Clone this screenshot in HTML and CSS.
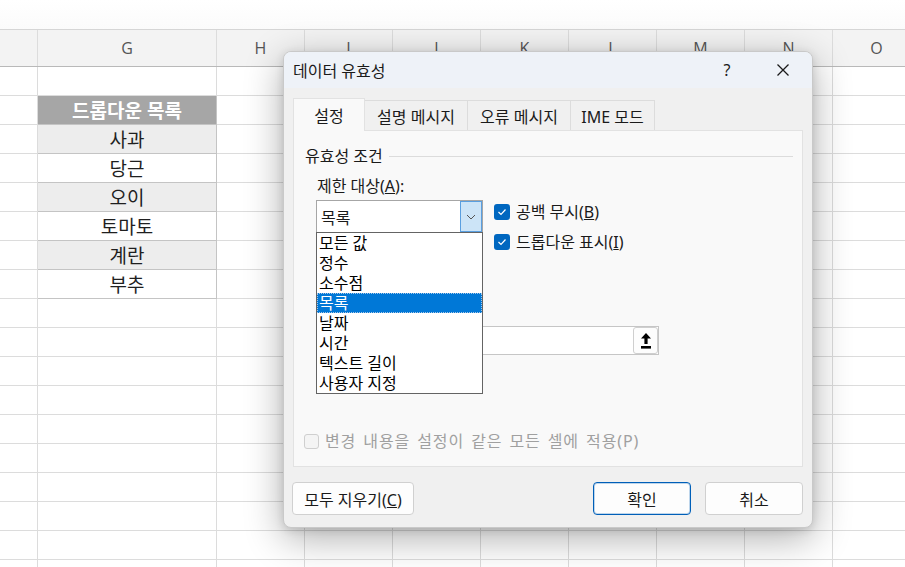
FILE: index.html
```html
<!DOCTYPE html>
<html lang="ko">
<head>
<meta charset="utf-8">
<link rel="stylesheet" href="styles.css">
</head>
<body>
<div class="sheet">
  <div class="topstrip"></div>
  <div class="colhead">
    <span></span><span>G</span><span>H</span><span>I</span><span>J</span><span>K</span><span>L</span><span>M</span><span>N</span><span>O</span>
  </div>
  <div class="row"><i></i><i></i><i></i><i></i><i></i><i></i><i></i><i></i><i></i><i></i></div>
  <div class="row"><i></i><i class="cell head">드롭다운 목록</i><i></i><i></i><i></i><i></i><i></i><i></i><i></i><i></i></div>
  <div class="row"><i></i><i class="cell alt">사과</i><i></i><i></i><i></i><i></i><i></i><i></i><i></i><i></i></div>
  <div class="row"><i></i><i class="cell">당근</i><i></i><i></i><i></i><i></i><i></i><i></i><i></i><i></i></div>
  <div class="row"><i></i><i class="cell alt">오이</i><i></i><i></i><i></i><i></i><i></i><i></i><i></i><i></i></div>
  <div class="row"><i></i><i class="cell">토마토</i><i></i><i></i><i></i><i></i><i></i><i></i><i></i><i></i></div>
  <div class="row"><i></i><i class="cell alt">계란</i><i></i><i></i><i></i><i></i><i></i><i></i><i></i><i></i></div>
  <div class="row"><i></i><i class="cell">부추</i><i></i><i></i><i></i><i></i><i></i><i></i><i></i><i></i></div>
  <div class="row"><i></i><i></i><i></i><i></i><i></i><i></i><i></i><i></i><i></i><i></i></div>
  <div class="row"><i></i><i></i><i></i><i></i><i></i><i></i><i></i><i></i><i></i><i></i></div>
  <div class="row"><i></i><i></i><i></i><i></i><i></i><i></i><i></i><i></i><i></i><i></i></div>
  <div class="row"><i></i><i></i><i></i><i></i><i></i><i></i><i></i><i></i><i></i><i></i></div>
  <div class="row"><i></i><i></i><i></i><i></i><i></i><i></i><i></i><i></i><i></i><i></i></div>
  <div class="row"><i></i><i></i><i></i><i></i><i></i><i></i><i></i><i></i><i></i><i></i></div>
  <div class="row"><i></i><i></i><i></i><i></i><i></i><i></i><i></i><i></i><i></i><i></i></div>
  <div class="row"><i></i><i></i><i></i><i></i><i></i><i></i><i></i><i></i><i></i><i></i></div>
  <div class="row"><i></i><i></i><i></i><i></i><i></i><i></i><i></i><i></i><i></i><i></i></div>
  <div class="row"><i></i><i></i><i></i><i></i><i></i><i></i><i></i><i></i><i></i><i></i></div>
</div>

<div class="dialog">
  <div class="titlebar">
    <span class="title">데이터 유효성</span>
    <span class="help">?</span>
    <span class="close">
      <svg width="14" height="14" viewBox="0 0 14 14"><path d="M1.5 1.5 L12.5 12.5 M12.5 1.5 L1.5 12.5" stroke="#1a1a1a" stroke-width="1.3" fill="none"/></svg>
    </span>
  </div>
  <div class="dlg-body">
    <div class="tabs">
      <div class="tab active w1">설정</div>
      <div class="tab w2">설명 메시지</div>
      <div class="tab w2">오류 메시지</div>
      <div class="tab w3">IME 모드</div>
    </div>
    <div class="panel">
      <div class="legend">유효성 조건</div>
      <div class="settings">
        <div class="lbl">제한 대상(<u>A</u>):</div>
        <div class="combo-row">
          <div class="combo">
            <span class="combo-text">목록</span>
            <span class="combo-btn">
              <svg width="10" height="6" viewBox="0 0 10 6"><path d="M1 1 L5 5 L9 1" stroke="#555" stroke-width="1" fill="none"/></svg>
            </span>
            <div class="list">
              <div class="item">모든 값</div>
              <div class="item">정수</div>
              <div class="item">소수점</div>
              <div class="item sel">목록</div>
              <div class="item">날짜</div>
              <div class="item">시간</div>
              <div class="item">텍스트 길이</div>
              <div class="item">사용자 지정</div>
            </div>
          </div>
          <div class="checks">
            <div class="check"><span class="cb"><svg width="10" height="8" viewBox="0 0 10 8"><path d="M1.5 4 L4 6.5 L8.5 1.5" stroke="#fff" stroke-width="1.2" fill="none"/></svg></span><span>공백 무시(<u>B</u>)</span></div>
            <div class="check"><span class="cb"><svg width="10" height="8" viewBox="0 0 10 8"><path d="M1.5 4 L4 6.5 L8.5 1.5" stroke="#fff" stroke-width="1.2" fill="none"/></svg></span><span>드롭다운 표시(<u>I</u>)</span></div>
          </div>
        </div>
        <div class="src-input">
          <span class="upload">
            <svg width="12" height="18" viewBox="0 0 12 18"><path d="M6 1 L11 6.5 H7.6 V12 H4.4 V6.5 H1 Z" fill="#000"/><rect x="1" y="14" width="10" height="2.6" fill="#000"/></svg>
          </span>
        </div>
      </div>
      <div class="apply"><span class="cb-off"></span><span>변경 내용을 설정이 같은 모든 셀에 적용(P)</span></div>
    </div>
    <div class="buttons">
      <button class="btn clear">모두 지우기(<u>C</u>)</button>
      <span class="spacer"></span>
      <button class="btn ok">확인</button>
      <button class="btn">취소</button>
    </div>
  </div>
</div>
</body>
</html>
```

FILE: styles.css
```css
html, body {
  margin: 0;
  padding: 0;
  width: 905px;
  height: 567px;
  overflow: hidden;
  background: #ffffff;
  font-family: "Noto Sans", "Noto Sans CJK KR", sans-serif;
}

.sheet {
  width: 905px;
  overflow: hidden;
}

.topstrip {
  height: 29px;
  background: linear-gradient(#ffffff, #fbfbfb);
  border-bottom: 1px solid #d6d6d6;
}

.colhead,
.row {
  display: grid;
  grid-template-columns: 38px 179px repeat(8, 88px);
  width: 921px;
}

.colhead {
  height: 37px;
  background: #f3f3f3;
  border-bottom: 1px solid #b9b9b9;
  box-sizing: border-box;
}

.colhead span {
  border-right: 1px solid #dcdcdc;
  display: flex;
  align-items: center;
  justify-content: center;
  font-family: "Open Sans", "Liberation Sans", sans-serif;
  font-size: 16px;
  color: #555;
}

.row {
  height: 29px;
}

.row i {
  font-style: normal;
  border-right: 1px solid #dcdcdc;
  border-bottom: 1px solid #dcdcdc;
  box-sizing: border-box;
}

.row .cell {
  display: flex;
  align-items: center;
  justify-content: center;
  font-size: 19px;
  color: #1f1f1f;
  border-color: #c4c4c4;
  background: #ffffff;
}

.row .cell.alt {
  background: #ededed;
}

.row .cell.head {
  background: #a6a6a6;
  color: #ffffff;
  font-weight: bold;
  font-size: 19px;
}

/* dialog */
.dialog {
  position: absolute;
  left: 283px;
  top: 51px;
  width: 530px;
  height: 477px;
  box-sizing: border-box;
  border: 1px solid #c9c9c9;
  border-radius: 8px;
  background: #f0f0f0;
  box-shadow: 0 10px 38px rgba(0, 0, 0, 0.32), 0 2px 8px rgba(0, 0, 0, 0.12);
  overflow: hidden;
  font-size: 16px;
  color: #1a1a1a;
}

.titlebar {
  height: 36px;
  background: #eef2f8;
  display: flex;
  align-items: center;
  padding-left: 9px;
}

.title {
  flex: 1;
  font-size: 16px;
  padding-bottom: 1px;
}

.help {
  width: 20px;
  text-align: center;
  margin-right: 39px;
  font-size: 16px;
}

.close {
  width: 14px;
  height: 14px;
  display: flex;
  margin-right: 22px;
}

.dlg-body {
  padding: 10px 9px 0 9px;
}

.tabs {
  display: flex;
  height: 32px;
  align-items: flex-end;
}

.tab {
  height: 30px;
  box-sizing: border-box;
  border: 1px solid #dcdcdc;
  border-bottom: none;
  border-left: none;
  display: flex;
  align-items: center;
  justify-content: center;
  background: #f0f0f0;
}

.tab.active {
  height: 33px;
  margin-bottom: -1px;
  background: #f9f9f9;
  border-left: 1px solid #e2e2e2;
  border-color: #e2e2e2;
  position: relative;
  z-index: 1;
}

.w1 { width: 72px; }
.w2 { width: 103px; }
.w3 { width: 84px; }

.panel {
  height: 337px;
  box-sizing: border-box;
  background: #f9f9f9;
  border: 1px solid #e2e2e2;
  padding: 14px 9px 0 11px;
}

.legend {
  display: flex;
  align-items: center;
  line-height: 22px;
}

.legend::after {
  content: "";
  flex: 1;
  border-top: 1px solid #dcdcdc;
  margin-left: 6px;
}

.settings {
  margin-left: 11px;
}

.lbl {
  line-height: 22px;
  margin-top: 8px;
  padding-left: 1px;
}

.combo-row {
  display: flex;
  align-items: flex-start;
  height: 33px;
  margin-top: 3px;
  gap: 11px;
}

.combo {
  position: relative;
  width: 167px;
  height: 33px;
  box-sizing: border-box;
  border: 1px solid #a6a6a6;
  background: #ffffff;
  display: flex;
  align-items: center;
  flex-shrink: 0;
}

.combo-text {
  flex: 1;
  padding-left: 4px;
}

.combo-btn {
  width: 22px;
  height: 31px;
  box-sizing: border-box;
  background: #cce4f7;
  border: 1px solid #5a9fe0;
  display: flex;
  align-items: center;
  justify-content: center;
}

.list {
  position: absolute;
  left: -1px;
  top: 31px;
  width: 167px;
  box-sizing: border-box;
  border: 1px solid #646464;
  background: #ffffff;
  z-index: 5;
}

.item {
  height: 20px;
  line-height: 20px;
  padding-left: 2px;
  color: #000;
  white-space: nowrap;
}

.item.sel {
  background: #0078d7;
  color: #ffffff;
  outline: 1px dotted #a9c8e8;
  outline-offset: -1px;
}

.checks {
  display: flex;
  flex-direction: column;
  gap: 10px;
  margin-top: 2px;
}

.check {
  display: flex;
  align-items: center;
  line-height: 20px;
  gap: 6px;
  white-space: nowrap;
}

.cb {
  width: 16px;
  height: 16px;
  border-radius: 3px;
  background: #0067c0;
  display: flex;
  align-items: center;
  justify-content: center;
}

.src-input {
  margin-top: 93px;
  width: 343px;
  height: 29px;
  box-sizing: border-box;
  border: 1px solid #c6c6c6;
  background: #ffffff;
  display: flex;
  justify-content: flex-end;
  align-items: center;
}

.upload {
  width: 25px;
  height: 27px;
  box-sizing: border-box;
  border: 1px solid #cfcfcf;
  border-radius: 3px;
  background: #fdfdfd;
  display: flex;
  align-items: center;
  justify-content: center;
}

.apply {
  display: flex;
  align-items: center;
  gap: 6px;
  line-height: 20px;
  margin-top: 76px;
  margin-left: -1px;
  color: #a0a0a0;
  letter-spacing: 0.9px;
  word-spacing: 2px;
  white-space: nowrap;
}

.cb-off {
  width: 15px;
  height: 15px;
  box-sizing: border-box;
  border: 1px solid #cfcfcf;
  border-radius: 3px;
  background: #f4f4f4;
}

.buttons {
  display: flex;
  gap: 14px;
  margin-top: 15px;
  margin-left: -1px;
}

.spacer {
  flex: 1;
}

.btn {
  height: 33px;
  width: 98px;
  box-sizing: border-box;
  border: 1px solid #d0d0d0;
  border-radius: 4px;
  background: #fdfdfd;
  font-family: "Noto Sans", "Noto Sans CJK KR", sans-serif;
  font-size: 16px;
  color: #1a1a1a;
  padding: 0;
}

.btn.clear {
  width: 122px;
}

.btn.ok {
  border: 1px solid #005fb8;
  box-shadow: inset 0 0 0 1px rgba(0, 95, 184, 0.25);
}
```
